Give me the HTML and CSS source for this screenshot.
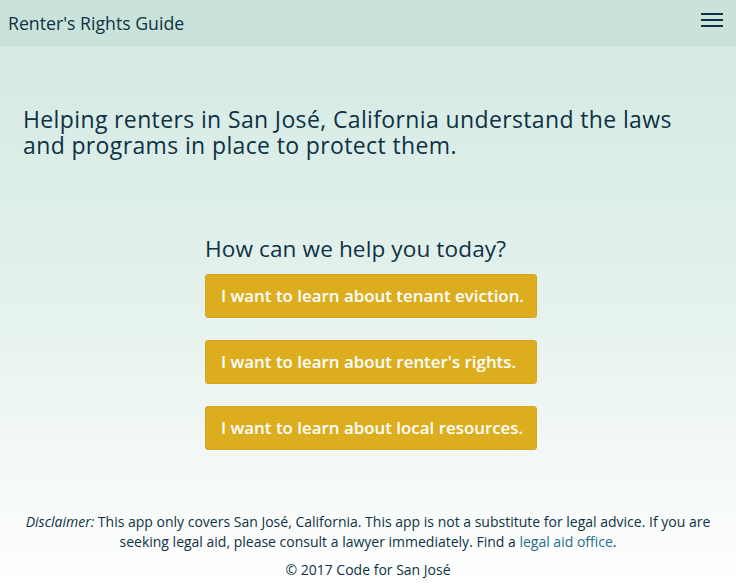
FILE: index.html
```html
<!DOCTYPE html>
<html lang="en">
<head>
<meta charset="utf-8">
<title>Renter's Rights Guide</title>
<link rel="stylesheet" href="styles.css">
</head>
<body>
<div class="page">
  <header class="topbar">
    <span class="brand">Renter's Rights Guide</span>
    <button class="menu" aria-label="Menu">
      <svg width="22" height="16" viewBox="0 0 22 16"><rect x="0" y="1" width="22" height="2" fill="#0e3243"/><rect x="0" y="7" width="22" height="2" fill="#0e3243"/><rect x="0" y="13" width="22" height="2" fill="#0e3243"/></svg>
    </button>
  </header>
  <main class="main">
    <h1 class="lead">Helping renters in San José, California understand the laws and programs in place to protect them.</h1>
    <section class="help">
      <h2 class="help-title">How can we help you today?</h2>
      <a class="btn" href="#">I want to learn about tenant eviction.</a>
      <a class="btn" href="#">I want to learn about renter's rights.</a>
      <a class="btn" href="#">I want to learn about local resources.</a>
    </section>
  </main>
  <footer class="foot">
    <p class="disclaimer"><em>Disclaimer:</em> This app only covers San José, California. This app is not a substitute for legal advice. If you are seeking legal aid, please consult a lawyer immediately. Find a <a href="#">legal aid office</a>.</p>
    <p class="copy">© 2017 Code for San José</p>
  </footer>
</div>
</body>
</html>
```
FILE: styles.css
```css
html, body {
  margin: 0;
  padding: 0;
}
body {
  font-family: "Open Sans", Lato, sans-serif;
  color: #0e3243;
  background: #ffffff;
}
.page {
  min-height: 588px;
  display: flex;
  flex-direction: column;
  background: linear-gradient(to bottom, #d2e9e2 0%, #e6f2ee 55%, #ffffff 100%);
}
.topbar {
  height: 46px;
  background: #c9e3db;
  display: flex;
  align-items: center;
  justify-content: space-between;
  padding: 0 13px 0 8px;
}
.brand {
  font-size: 17.7px;
  color: #0e3243;
}
.menu {
  background: none;
  border: 0;
  padding: 0;
  width: 22px;
  height: 16px;
  display: block;
  margin-top: -6px;
}
.menu svg { display: block; }
.main {
  padding: 0 23px;
  display: flex;
  flex-direction: column;
}
.lead {
  margin: 60px 0 0;
  font-size: 23px;
  letter-spacing: 0.37px;
  line-height: 26px;
  font-weight: 400;
}
.help {
  margin: 78px 0 0 182px;
  width: 332px;
  display: flex;
  flex-direction: column;
  gap: 22px;
}
.help-title {
  margin: 0 0 -10px;
  font-size: 22.6px;
  letter-spacing: 0.1px;
  line-height: 26px;
  font-weight: 400;
  white-space: nowrap;
}
.btn {
  display: block;
  height: 44px;
  box-sizing: border-box;
  background: #dcae1f;
  border: 1px solid #d3a61e;
  border-radius: 3px;
  color: #ffffff;
  text-decoration: none;
  font-weight: 600;
  font-size: 16.9px;
  line-height: 42px;
  padding-left: 15px;
  white-space: nowrap;
}
.foot {
  margin-top: auto;
  text-align: center;
  font-size: 14px;
  line-height: 20px;
  padding: 0 20px 8px;
}
.disclaimer { margin: 0 0 8px; }
.disclaimer a { color: #1f6e8c; text-decoration: none; }
.copy { margin: 0; }
```
